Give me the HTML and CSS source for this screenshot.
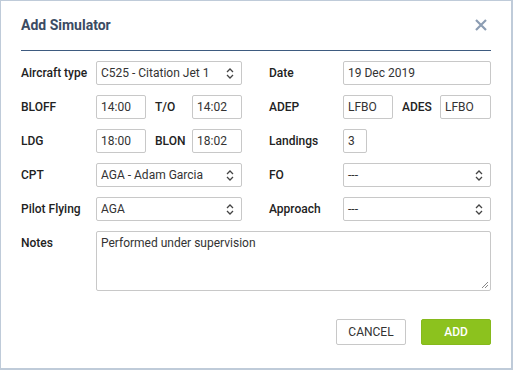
FILE: index.html
```html
<!DOCTYPE html>
<html>
<head>
  <title>Add Simulator</title>
  <link rel="stylesheet" href="styles.css">
</head>
<body>
  <div class="dialog">
    <div class="dialog-header">
      <h2>Add Simulator</h2>
      <span class="close">
        <svg width="12" height="12" viewBox="0 0 12 12"><path d="M1 1L11 11M11 1L1 11" stroke="#8c9db3" stroke-width="2.2"/></svg>
      </span>
    </div>

    <form class="sim-form">
      <label>Aircraft type</label>
      <div class="select">C525 - Citation Jet 1
        <svg class="chev" width="8" height="11" viewBox="0 0 8 11"><path d="M1 4L4 1L7 4M1 7L4 10L7 7" fill="none" stroke="#444" stroke-width="1.3"/></svg>
      </div>
      <span></span>
      <label>Date</label>
      <div class="input">19 Dec 2019</div>

      <label>BLOFF</label>
      <div class="pair">
        <div class="input short">14:00</div>
        <label class="inner">T/O</label>
        <div class="input short">14:02</div>
      </div>
      <span></span>
      <label>ADEP</label>
      <div class="pair">
        <div class="input short">LFBO</div>
        <label class="inner narrow">ADES</label>
        <div class="input short wide">LFBO</div>
      </div>

      <label>LDG</label>
      <div class="pair">
        <div class="input short">18:00</div>
        <label class="inner">BLON</label>
        <div class="input short">18:02</div>
      </div>
      <span></span>
      <label>Landings</label>
      <div class="pair">
        <div class="input tiny">3</div>
      </div>

      <label>CPT</label>
      <div class="select">AGA - Adam Garcia
        <svg class="chev" width="8" height="11" viewBox="0 0 8 11"><path d="M1 4L4 1L7 4M1 7L4 10L7 7" fill="none" stroke="#444" stroke-width="1.3"/></svg>
      </div>
      <span></span>
      <label>FO</label>
      <div class="select">---
        <svg class="chev" width="8" height="11" viewBox="0 0 8 11"><path d="M1 4L4 1L7 4M1 7L4 10L7 7" fill="none" stroke="#444" stroke-width="1.3"/></svg>
      </div>

      <label>Pilot Flying</label>
      <div class="select">AGA
        <svg class="chev" width="8" height="11" viewBox="0 0 8 11"><path d="M1 4L4 1L7 4M1 7L4 10L7 7" fill="none" stroke="#444" stroke-width="1.3"/></svg>
      </div>
      <span></span>
      <label>Approach</label>
      <div class="select">---
        <svg class="chev" width="8" height="11" viewBox="0 0 8 11"><path d="M1 4L4 1L7 4M1 7L4 10L7 7" fill="none" stroke="#444" stroke-width="1.3"/></svg>
      </div>

      <label class="top">Notes</label>
      <div class="textarea">Performed under supervision
        <svg class="grip" width="8" height="8" viewBox="0 0 8 8"><path d="M7 1L1 7M7 4L4 7" stroke="#888" stroke-width="1"/></svg>
      </div>
    </form>

    <div class="actions">
      <button type="button" class="btn-cancel">CANCEL</button>
      <button type="button" class="btn-add">ADD</button>
    </div>
  </div>
</body>
</html>
```

FILE: styles.css
```css
html, body {
  margin: 0;
  padding: 0;
}

body {
  font-family: Roboto, Arial, sans-serif;
  background-color: #fff;
  width: 513px;
  height: 370px;
  box-sizing: border-box;
  border-style: solid;
  border-color: #bfcbd9;
  border-width: 1px 2px 2px 1px;
}

.dialog {
  padding: 0 20px;
}

.dialog-header {
  display: flex;
  justify-content: space-between;
  align-items: center;
  height: 49px;
  border-bottom: 1.5px solid #3e5b80;
}

.dialog-header h2 {
  margin: 0 0 2px 0;
  font-size: 14px;
  font-weight: bold;
  color: #3b4b63;
}

.close {
  display: flex;
  margin: 0 4px 2px 0;
}

.sim-form {
  display: grid;
  grid-template-columns: 75px 146px 27px 74px 148px;
  row-gap: 10px;
  margin-top: 10px;
  font-size: 12px;
}

.sim-form label {
  display: flex;
  align-items: center;
  height: 24px;
  color: #222;
  font-weight: 500;
}

.input, .select, .textarea {
  box-sizing: border-box;
  border: 1px solid #c8c8c8;
  border-radius: 2px;
  padding: 0 4px;
  color: #333;
  display: flex;
  align-items: center;
  height: 24px;
}

.select {
  justify-content: space-between;
  padding-right: 7px;
}

.pair {
  display: flex;
}

.input.short {
  width: 50px;
}

.input.wide {
  width: 51px;
}

.input.tiny {
  width: 24px;
}

.sim-form label.inner {
  width: 46px;
  padding-left: 9px;
  box-sizing: border-box;
}

.sim-form label.inner.narrow {
  width: 47px;
}

.textarea {
  grid-column: 2 / 6;
  height: 60px;
  align-items: flex-start;
  padding-top: 4px;
  position: relative;
}

.grip {
  position: absolute;
  right: 1px;
  bottom: 1px;
}

.actions {
  display: flex;
  justify-content: flex-end;
  gap: 15px;
  margin-top: 28px;
}

.actions button {
  width: 70px;
  height: 26px;
  font-family: Roboto, Arial, sans-serif;
  font-size: 12px;
  border-radius: 2px;
  cursor: pointer;
}

.btn-cancel {
  background-color: #fff;
  border: 1px solid #c8c8c8;
  color: #333;
}

.btn-add {
  background-color: #8cc21e;
  border: 1px solid #86b91c;
  color: #fff;
  font-weight: 500;
}
```
